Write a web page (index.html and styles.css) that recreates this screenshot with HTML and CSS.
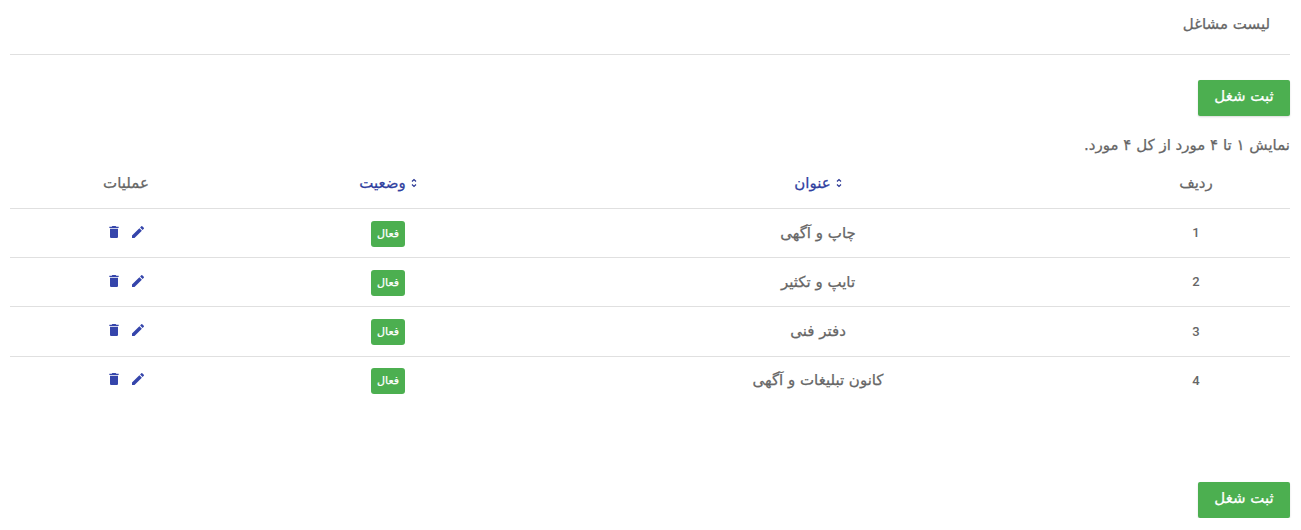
FILE: index.html
```html
<!DOCTYPE html>
<html lang="fa" dir="rtl">
<head>
    <meta charset="UTF-8">
    <title>لیست مشاغل</title>
    <link rel="stylesheet" href="styles.css">
</head>
<body>
<div class="page">
    <div class="page-title">لیست مشاغل</div>
    <div class="actions"><a class="btn" href="#">ثبت شغل</a></div>
    <div class="summary">نمایش ۱ تا ۴ مورد از کل ۴ مورد.</div>
    <table class="grid">
        <thead>
        <tr>
            <th class="col-id">ردیف</th>
            <th class="col-title"><a href="#"><svg class="sort" viewBox="0 0 6 10"><path d="M1 3.5 3 1.5 5 3.5M1 6.5 3 8.5 5 6.5"/></svg>عنوان</a></th>
            <th class="col-status"><a href="#"><svg class="sort" viewBox="0 0 6 10"><path d="M1 3.5 3 1.5 5 3.5M1 6.5 3 8.5 5 6.5"/></svg>وضعیت</a></th>
            <th class="col-ops">عملیات</th>
        </tr>
        </thead>
        <tbody>
        <tr>
            <td class="num">1</td>
            <td>چاپ و آگهی</td>
            <td><span class="badge">فعال</span></td>
            <td>
                <div class="ops">
                    <a href="#"><svg viewBox="0 0 24 24"><path d="M3 17.25V21h3.75L17.81 9.94l-3.75-3.75zM20.71 7.04a1 1 0 0 0 0-1.41l-2.34-2.34a1 1 0 0 0-1.41 0l-1.83 1.83 3.75 3.75z"/></svg></a>
                    <a href="#"><svg viewBox="0 0 24 24"><path d="M6 19c0 1.1.9 2 2 2h8c1.1 0 2-.9 2-2V7H6zM19 4h-3.5l-1-1h-5l-1 1H5v2h14z"/></svg></a>
                </div>
            </td>
        </tr>
        <tr>
            <td class="num">2</td>
            <td>تایپ و تکثیر</td>
            <td><span class="badge">فعال</span></td>
            <td>
                <div class="ops">
                    <a href="#"><svg viewBox="0 0 24 24"><path d="M3 17.25V21h3.75L17.81 9.94l-3.75-3.75zM20.71 7.04a1 1 0 0 0 0-1.41l-2.34-2.34a1 1 0 0 0-1.41 0l-1.83 1.83 3.75 3.75z"/></svg></a>
                    <a href="#"><svg viewBox="0 0 24 24"><path d="M6 19c0 1.1.9 2 2 2h8c1.1 0 2-.9 2-2V7H6zM19 4h-3.5l-1-1h-5l-1 1H5v2h14z"/></svg></a>
                </div>
            </td>
        </tr>
        <tr class="row-tall">
            <td class="num">3</td>
            <td>دفتر فنی</td>
            <td><span class="badge">فعال</span></td>
            <td>
                <div class="ops">
                    <a href="#"><svg viewBox="0 0 24 24"><path d="M3 17.25V21h3.75L17.81 9.94l-3.75-3.75zM20.71 7.04a1 1 0 0 0 0-1.41l-2.34-2.34a1 1 0 0 0-1.41 0l-1.83 1.83 3.75 3.75z"/></svg></a>
                    <a href="#"><svg viewBox="0 0 24 24"><path d="M6 19c0 1.1.9 2 2 2h8c1.1 0 2-.9 2-2V7H6zM19 4h-3.5l-1-1h-5l-1 1H5v2h14z"/></svg></a>
                </div>
            </td>
        </tr>
        <tr class="row-last">
            <td class="num">4</td>
            <td>کانون تبلیغات و آگهی</td>
            <td><span class="badge">فعال</span></td>
            <td>
                <div class="ops">
                    <a href="#"><svg viewBox="0 0 24 24"><path d="M3 17.25V21h3.75L17.81 9.94l-3.75-3.75zM20.71 7.04a1 1 0 0 0 0-1.41l-2.34-2.34a1 1 0 0 0-1.41 0l-1.83 1.83 3.75 3.75z"/></svg></a>
                    <a href="#"><svg viewBox="0 0 24 24"><path d="M6 19c0 1.1.9 2 2 2h8c1.1 0 2-.9 2-2V7H6zM19 4h-3.5l-1-1h-5l-1 1H5v2h14z"/></svg></a>
                </div>
            </td>
        </tr>
        </tbody>
    </table>
    <div class="actions actions-bottom"><a class="btn" href="#">ثبت شغل</a></div>
</div>
</body>
</html>
```

FILE: styles.css
```css
* {
    margin: 0;
    padding: 0;
    box-sizing: border-box;
}

body {
    font-family: "DejaVu Sans", sans-serif;
    font-size: 15px;
    color: #666;
    background-color: #fff;
    -webkit-text-stroke: .25px;
}

a {
    text-decoration: none;
}

.page {
    padding: 0 11px 0 10px;
}

.page-title {
    height: 55px;
    padding: 14px 20px 0 0;
    line-height: 20px;
    border-bottom: 1px solid #e0e0e0;
}

.actions {
    display: flex;
    margin-top: 25px;
}

.actions-bottom {
    margin-top: 78px;
}

.btn {
    display: block;
    width: 92px;
    height: 36px;
    background-color: #4caf50;
    color: #fff;
    line-height: 33px;
    text-align: center;
    border-radius: 2px;
    box-shadow: 0 1px 2px rgba(0, 0, 0, .15);
}

.summary {
    margin-top: 19px;
    height: 20px;
    line-height: 20px;
}

.grid {
    width: 100%;
    border-collapse: collapse;
    table-layout: fixed;
    margin-top: 4px;
}

.grid th {
    height: 49px;
    font-weight: 400;
    border-bottom: 1px solid #e0e0e0;
}

.grid th a {
    color: #303f9f;
}

.grid td {
    height: 49px;
    text-align: center;
    border-bottom: 1px solid #e0e0e0;
}

.grid .row-tall td {
    height: 50px;
}

.grid .row-last td {
    height: 48px;
    border-bottom: 0;
}

.grid .num {
    font-family: Roboto, sans-serif;
    font-size: 13px;
    font-weight: 500;
    -webkit-text-stroke: 0;
}

.col-id {
    width: 188px;
}

.col-title {
    width: 568px;
}

.col-status {
    width: 292px;
}

.sort {
    width: 6px;
    height: 10px;
    margin-left: 5px;
    fill: none;
    stroke: #283593;
    stroke-width: 1.2;
}

.badge {
    display: inline-block;
    position: relative;
    top: 1px;
    width: 34px;
    height: 26px;
    background-color: #4caf50;
    color: #fff;
    font-size: 11px;
    line-height: 25px;
    border-radius: 3px;
}

.ops {
    display: flex;
    justify-content: center;
    gap: 8px;
    margin-bottom: 2px;
}

.ops svg {
    display: block;
    width: 16px;
    height: 16px;
    fill: #3545ab;
}
```
